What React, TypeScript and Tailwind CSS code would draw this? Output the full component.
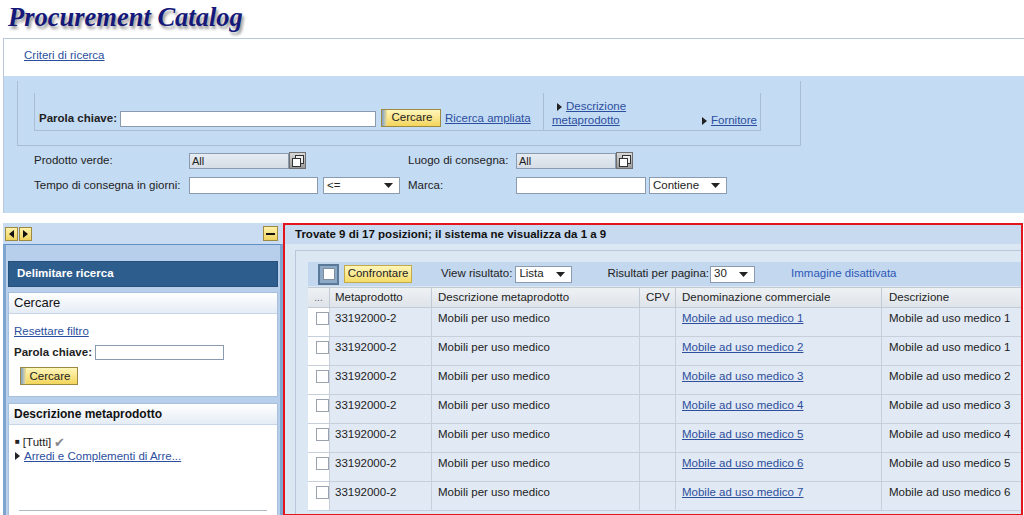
import React from "react";

const F = { fontFamily: '"Liberation Sans", Arial, sans-serif' };

function Caret() {
  return (
    <svg width="9" height="5" viewBox="0 0 9 5" className="shrink-0">
      <path d="M0 0 H9 L4.5 5 Z" fill="#222" />
    </svg>
  );
}

function Select({ value, w }: { value: string; w: string }) {
  return (
    <div className={`${w} h-[17px] bg-white border border-[#8a9bb0] flex items-center justify-between pl-[3px] pr-[6px] text-[11.5px] text-[#222] leading-none`}>
      <span>{value}</span>
      <Caret />
    </div>
  );
}

function YButton({ label, w }: { label: string; w: string }) {
  return (
    <div className={`${w} h-[18px] flex items-stretch border border-[#9c8a44] bg-gradient-to-b from-[#fff6b8] to-[#f3d55a] text-[11.5px] text-[#222] leading-none`}>
      <div className="w-[5px] bg-gradient-to-r from-[#7d9fc8] to-[#f6e18a]" />
      <div className="flex-1 flex items-center justify-center pr-[3px]">{label}</div>
    </div>
  );
}

function PickIcon() {
  return (
    <div className="w-[17px] h-[17px] bg-gradient-to-b from-[#d9d9d9] to-[#9a9a9a] border border-[#6f6f6f] flex items-center justify-center">
      <svg width="12" height="12" viewBox="0 0 12 12">
        <rect x="3.5" y="0.5" width="8" height="8" fill="#eee" stroke="#333" />
        <rect x="0.5" y="3.5" width="8" height="8" fill="#fff" stroke="#333" />
      </svg>
    </div>
  );
}

function Tri({ color = "#222" }: { color?: string }) {
  return (
    <svg width="5" height="8" viewBox="0 0 5 8" className="inline-block mr-[4px]">
      <path d="M0 0 L5 4 L0 8 Z" fill={color} />
    </svg>
  );
}

const rows = [
  ["Mobile ad uso medico 1", "Mobile ad uso medico 1"],
  ["Mobile ad uso medico 2", "Mobile ad uso medico 1"],
  ["Mobile ad uso medico 3", "Mobile ad uso medico 2"],
  ["Mobile ad uso medico 4", "Mobile ad uso medico 3"],
  ["Mobile ad uso medico 5", "Mobile ad uso medico 4"],
  ["Mobile ad uso medico 6", "Mobile ad uso medico 5"],
  ["Mobile ad uso medico 7", "Mobile ad uso medico 6"],
];

export default function App() {
  return (
    <div style={F} className="w-[1024px] h-[515px] overflow-hidden bg-white text-[11.5px] text-[#222]">
      {/* Title */}
      <div className="h-[38px] pl-[8px] pt-[2px]">
        <span
          className="text-[26.5px] font-bold italic text-[#14197a] leading-[30px]"
          style={{ fontFamily: '"Liberation Serif", "Times New Roman", serif', textShadow: "2px 3px 3px #9a9a9a" }}
        >
          Procurement Catalog
        </span>
      </div>

      {/* Search criteria */}
      <div className="ml-[3px] border-t border-l border-[#b9c8da]">
        <div className="h-[37px] flex items-center pl-[20px] pb-[3px]">
          <span className="text-[#2b4f9e] underline">Criteri di ricerca</span>
        </div>
        <div className="h-[137px] bg-[#c4dbf4] pt-[5px]">
          <div className="ml-[13px] w-[784px] h-[65px] border-l border-r border-b border-[#a9bdd4] pt-[12px]">
            <div className="flex">
              <div className="ml-[16px] w-[509px] h-[38px] border-l border-b border-[#a9bdd4] flex items-end pb-[3px] pl-[4px]">
                <span className="font-bold mr-[3px]">Parola chiave:</span>
                <div className="w-[256px] h-[16px] bg-white border border-[#8a9bb0] mr-[5px]" />
                <YButton label="Cercare" w="w-[60px]" />
                <span className="ml-[4px] text-[#2b4f9e] underline">Ricerca ampliata</span>
              </div>
              <div className="w-[218px] h-[38px] border-l border-r border-b border-[#a9bdd4] flex items-end justify-between pb-[3px] pl-[8px] pr-[3px]">
                <div className="leading-[14px]">
                  <div className="pl-[5px]"><Tri /><span className="text-[#2b4f9e] underline">Descrizione</span></div>
                  <div className="text-[#2b4f9e] underline">metaprodotto</div>
                </div>
                <div className="leading-[14px]"><Tri /><span className="text-[#2b4f9e] underline">Fornitore</span></div>
              </div>
            </div>
          </div>
          <div className="pl-[30px] pt-[6px] flex flex-col gap-[8px]">
            <div className="flex items-center h-[17px]">
              <span className="w-[155px]">Prodotto verde:</span>
              <div className="w-[219px] flex items-center">
                <div className="w-[100px] h-[16px] bg-gradient-to-b from-[#e6ecf3] to-[#d5dde6] border border-[#8a9bb0] pl-[2px] text-[11px] leading-[14px]">All</div>
                <PickIcon />
              </div>
              <span className="w-[108px]">Luogo di consegna:</span>
              <div className="w-[100px] h-[16px] bg-gradient-to-b from-[#e6ecf3] to-[#d5dde6] border border-[#8a9bb0] pl-[2px] text-[11px] leading-[14px]">All</div>
              <PickIcon />
            </div>
            <div className="flex items-center h-[17px]">
              <span className="w-[155px]">Tempo di consegna in giorni:</span>
              <div className="w-[219px] flex items-center">
                <div className="w-[129px] h-[17px] bg-white border border-[#8a9bb0]" />
                <div className="ml-[5px]"><Select value="<=" w="w-[77px]" /></div>
              </div>
              <span className="w-[108px]">Marca:</span>
              <div className="w-[130px] h-[17px] bg-white border border-[#8a9bb0]" />
              <div className="ml-[3px]"><Select value="Contiene" w="w-[78px]" /></div>
            </div>
          </div>
        </div>
      </div>

      {/* Lower section */}
      <div className="mt-[10px] ml-[3px] flex h-[293px]">
        {/* Left panel */}
        <div className="w-[280px] flex flex-col">
          <div className="h-[21px] bg-[#c9dcf1] flex items-center justify-between pl-[2px] pr-[5px]">
            <div className="flex">
              <div className="w-[13px] h-[14px] bg-gradient-to-b from-[#fff2a8] to-[#efd35e] border border-[#9c8a44] flex items-center justify-center">
                <svg width="5" height="8" viewBox="0 0 5 8"><path d="M5 0 L0 4 L5 8 Z" fill="#111" /></svg>
              </div>
              <div className="w-[13px] h-[14px] ml-[1px] bg-gradient-to-b from-[#fff2a8] to-[#efd35e] border border-[#9c8a44] flex items-center justify-center">
                <svg width="5" height="8" viewBox="0 0 5 8"><path d="M0 0 L5 4 L0 8 Z" fill="#111" /></svg>
              </div>
            </div>
            <div className="w-[15px] h-[15px] bg-gradient-to-b from-[#fff2a8] to-[#efd35e] border border-[#9c8a44] flex items-center justify-center">
              <div className="w-[9px] h-[2px] bg-[#111]" />
            </div>
          </div>
          <div className="flex-1 bg-[#b7cfeb] border-t border-[#5f8fc4] border-x-[3px] border-x-[#7ea4d0] pt-[16px] px-[2px] flex flex-col">
            <div className="h-[26px] bg-[#2d5d8d] border border-[#25507b] flex items-center pl-[8px] text-white font-bold">
              Delimitare ricerca
            </div>
            <div className="mt-[5px] border border-[#a6c0de] bg-white">
              <div className="h-[21px] bg-gradient-to-b from-[#ffffff] to-[#e5ecf5] border-b border-[#c7d5e6] flex items-center pl-[5px] text-[13px] text-[#111]">
                Cercare
              </div>
              <div className="h-[82px] pl-[5px] pt-[10px]">
                <div className="text-[#2b4f9e] underline leading-[14px]">Resettare filtro</div>
                <div className="flex items-center mt-[6px]">
                  <span className="font-bold mr-[3px]">Parola chiave:</span>
                  <div className="w-[129px] h-[15px] border border-[#8a9bb0] bg-white" />
                </div>
                <div className="mt-[6px] ml-[6px]"><YButton label="Cercare" w="w-[58px]" /></div>
              </div>
            </div>
            <div className="mt-[6px] border border-[#a6c0de] bg-white flex-1">
              <div className="h-[21px] bg-gradient-to-b from-[#ffffff] to-[#e5ecf5] border-b border-[#c7d5e6] flex items-center pl-[5px] font-bold text-[12px] text-[#111]">
                Descrizione metaprodotto
              </div>
              <div className="pl-[6px] pt-[10px] leading-[14px]">
                <div className="flex items-center">
                  <span className="text-[8px] mr-[3px]">■</span>
                  <span>[Tutti]</span>
                  <span className="ml-[3px] text-[#888] text-[13px] leading-[13px]">✔</span>
                </div>
                <div className="flex items-center">
                  <Tri />
                  <span className="text-[#2b4f9e] underline">Arredi e Complementi di Arre...</span>
                </div>
              </div>
              <div className="mt-[47px] mx-[10px] border-t border-[#b0b8c4]" />
            </div>
          </div>
        </div>

        {/* Right panel */}
        <div className="w-[740px] border-2 border-[#e2141c] flex flex-col overflow-hidden">
          <div className="h-[19px] bg-[#c7daef] flex items-center pl-[10px] font-bold text-[#111]">
            Trovate 9 di 17 posizioni; il sistema ne visualizza da 1 a 9
          </div>
          <div className="flex-1 bg-[#dce7f4] pl-[10px] pt-[6px]">
            <div className="h-full border-l border-t border-[#b8c8da] pl-[12px] pt-[11px]">
              <div className="h-[24px] bg-[#c3d7ee] flex items-center pl-[10px]">
                <div className="w-[21px] h-[21px] border-2 border-[#5a7898] bg-[#8ea9c6] flex items-center justify-center">
                  <div className="w-[12px] h-[12px] bg-white border border-[#8090a0]" />
                </div>
                <div className="ml-[5px]">
                  <div className="w-[68px] h-[18px] border border-[#c4a94a] bg-gradient-to-b from-[#fff6b8] to-[#f5dc68] flex items-center justify-center">Confrontare</div>
                </div>
                <span className="ml-[29px]">View risultato:</span>
                <div className="ml-[3px]"><Select value="Lista" w="w-[57px]" /></div>
                <span className="ml-[35px]">Risultati per pagina:</span>
                <div className="ml-[1px]"><Select value="30" w="w-[45px]" /></div>
                <span className="ml-[36px] text-[#2d58b8]">Immagine disattivata</span>
              </div>
              <div className="mt-[1px]">
                <div className="flex h-[21px] bg-gradient-to-b from-[#eef1f4] to-[#dfe4ea] border-y border-[#c2cad4] text-[#222]">
                  <div className="w-[22px] border-r border-[#c2cad4] flex items-center justify-center text-[#666] text-[10px]">...</div>
                  <div className="w-[102px] border-r border-[#c2cad4] flex items-center pl-[5px]">Metaprodotto</div>
                  <div className="w-[208px] border-r border-[#c2cad4] flex items-center pl-[6px]">Descrizione metaprodotto</div>
                  <div className="w-[36px] border-r border-[#c2cad4] flex items-center pl-[6px]">CPV</div>
                  <div className="w-[206px] border-r border-[#c2cad4] flex items-center pl-[6px]">Denominazione commerciale</div>
                  <div className="flex-1 flex items-center pl-[7px]">Descrizione</div>
                </div>
                {rows.map(([d, e], i) => (
                  <div key={i} className="flex h-[29px] border-b border-[#c7cfda] bg-[#e1e9f4] text-[#222] leading-[14px]">
                    <div className="w-[22px] bg-white border-r border-[#c7cfda] flex justify-end pt-[4px]">
                      <div className="w-[13px] h-[13px] border border-[#9aa3ad] bg-white" />
                    </div>
                    <div className="w-[102px] border-r border-[#c7cfda] pl-[5px] pt-[3px]">33192000-2</div>
                    <div className="w-[208px] border-r border-[#c7cfda] pl-[6px] pt-[3px]">Mobili per uso medico</div>
                    <div className="w-[36px] border-r border-[#c7cfda]" />
                    <div className="w-[206px] border-r border-[#c7cfda] pl-[6px] pt-[3px]">
                      <span className="text-[#2d4f9c] underline">{d}</span>
                    </div>
                    <div className="flex-1 pl-[7px] pt-[3px] whitespace-nowrap">{e}</div>
                  </div>
                ))}
              </div>
            </div>
          </div>
        </div>
      </div>
    </div>
  );
}
